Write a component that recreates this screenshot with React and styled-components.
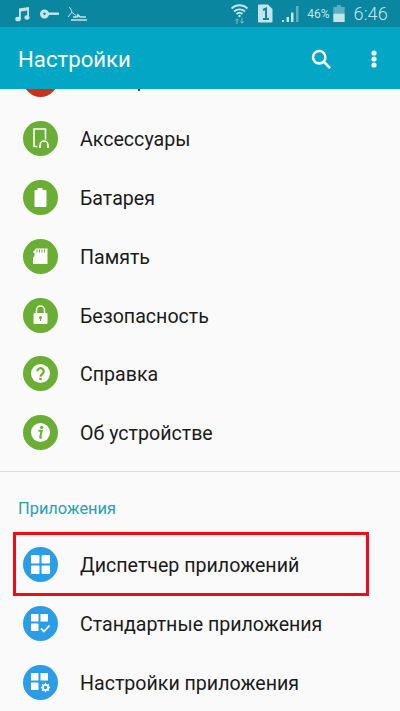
import React from "react";
import styled, { createGlobalStyle } from "styled-components";

const GlobalStyle = createGlobalStyle`
  html, body {
    margin: 0;
    padding: 0;
    background: #fafafa;
  }
`;

const Screen = styled.div`
  width: 400px;
  height: 711px;
  display: flex;
  flex-direction: column;
  overflow: hidden;
  background: #fafafa;
  font-family: Roboto, "Noto Sans", sans-serif;
`;
const StatusBar = styled.div`
  height: 27px;
  flex: none;
  display: flex;
  align-items: center;
  padding: 0 12px 0 15px;
  background: #0a86a1;
  color: #c4e4ea;
`;
const StatusIcon = styled.svg`
  display: block;
  flex: none;
  margin-right: ${(props) => props.$gap || 0}px;
`;
const Spacer = styled.div`
  flex: 1;
`;
const Percent = styled.span`
  font-size: 12px;
  margin-right: 4px;
`;
const Clock = styled.span`
  font-size: 18px;
  font-weight: 300;
  margin-left: 8px;
  letter-spacing: 0.2px;
`;
const AppBar = styled.div`
  height: 62px;
  flex: none;
  display: flex;
  align-items: center;
  padding: 1px 23px 0 18px;
  box-sizing: border-box;
  background: #04a6c6;
  color: #fff;
  position: relative;
  z-index: 1;
`;
const Title = styled.div`
  flex: 1;
  font-size: 22.2px;
`;
const ActionIcon = styled.svg`
  display: block;
  margin-right: ${(props) => props.$gap || 0}px;
`;
const List = styled.div`
  flex: 1;
  overflow: hidden;
  margin-top: -38.5px;
`;
const Row = styled.div`
  height: 58.8px;
  display: flex;
  align-items: center;
  padding-left: 23px;
  position: relative;
`;
const Badge = styled.div`
  width: 35px;
  height: 35px;
  flex: none;
  border-radius: 50%;
  background: ${(props) => props.$color};
  display: flex;
  align-items: center;
  justify-content: center;
`;
const Label = styled.div`
  margin-left: 22px;
  padding-top: 2px;
  font-size: 19.6px;
  color: #1b1b1b;
`;
const Divider = styled.div`
  height: 1px;
  margin-top: 9px;
  background: #dcdcdc;
`;
const SectionTitle = styled.div`
  font-size: 16.4px;
  line-height: 20px;
  color: #2b9fb1;
  padding: 27px 18px 16px;
`;
const Highlight = styled.div`
  position: absolute;
  left: 13px;
  top: -3px;
  width: 356px;
  height: 64px;
  box-sizing: border-box;
  border: 3px solid #f20a14;
`;

const GREEN = "#6aae35";
const BLUE = "#2a9de6";

const Accessory = () => (
  <svg width="35" height="35" viewBox="0 0 35 35" fill="none" stroke="#fff">
    <path d="M22.500 18.500V8H11V25.500H14.500" strokeWidth="1.600" />
    <path d="M17 26v-2a4 4 0 0 1 8 0v2" strokeWidth="1.500" />
    <rect x="16" y="24.500" width="2" height="2.500" fill="#fff" stroke="none" />
    <rect x="24" y="24.500" width="2" height="2.500" fill="#fff" stroke="none" />
  </svg>
);
const Battery = () => (
  <svg width="35" height="35" viewBox="0 0 35 35" fill="#fff">
    <path d="M14.500 8h5v2h3a1 1 0 0 1 1 1v15a1 1 0 0 1-1 1h-10a1 1 0 0 1-1-1V11a1 1 0 0 1 1-1h2z" />
  </svg>
);
const Memory = () => (
  <svg width="35" height="35" viewBox="0 0 35 35" fill="#fff">
    <path d="M13 9.500h11.500v15.500h-14.500v-6.500l1.500-1.500v-2.500l-1.500-1.500z" />
    <path d="M14 10.500v3M16.500 10.500v3M19 10.500v3M21.500 10.500v3" stroke={GREEN} strokeWidth="1" />
  </svg>
);
const Lock = () => (
  <svg width="35" height="35" viewBox="0 0 35 35" fill="none">
    <path d="M13.500 15v-3a4 4 0 0 1 8 0v3" stroke="#fff" strokeWidth="1.500" />
    <rect x="10.500" y="15" width="14" height="11" rx="1" fill="#fff" />
    <circle cx="17.500" cy="19.500" r="1.500" fill={GREEN} />
    <rect x="16.900" y="20" width="1.200" height="3" fill={GREEN} />
  </svg>
);
const Help = () => (
  <svg width="35" height="35" viewBox="0 0 35 35" fill="none">
    <circle cx="17.500" cy="17.500" r="9.500" fill="#fff" />
    <path d="M14.300 15.300a3.200 3.200 0 1 1 5 2.700c-1.200.8-1.800 1.300-1.800 2.700" stroke={GREEN} strokeWidth="2.200" />
    <rect x="16.300" y="21.800" width="2.400" height="2.400" fill={GREEN} />
  </svg>
);
const Info = () => (
  <svg width="35" height="35" viewBox="0 0 35 35" fill="none">
    <circle cx="17.500" cy="17.500" r="9.500" fill="#fff" />
    <circle cx="18.600" cy="12.300" r="1.600" fill={GREEN} />
    <path d="M15.500 15.800h3.200l-1.500 6.400c-.1.600.4.700 1.700.2" stroke={GREEN} strokeWidth="2" />
  </svg>
);
const Grid = () => (
  <svg width="35" height="35" viewBox="0 0 35 35" fill="#fff">
    <rect x="8" y="8" width="8.500" height="8.500" rx="1" />
    <rect x="18.500" y="8" width="8.500" height="8.500" rx="1" />
    <rect x="8" y="18.500" width="8.500" height="8.500" rx="1" />
    <rect x="18.500" y="18.500" width="8.500" height="8.500" rx="1" />
  </svg>
);
const GridCheck = () => (
  <svg width="35" height="35" viewBox="0 0 35 35" fill="#fff">
    <rect x="8" y="8" width="7.500" height="7.500" rx="0.500" />
    <rect x="17.500" y="8" width="7.500" height="7.500" rx="0.500" />
    <rect x="8" y="17.500" width="7.500" height="7.500" rx="0.500" />
    <path d="M18 22.500l3 3 5.500-6" fill="none" stroke="#fff" strokeWidth="1.800" />
  </svg>
);
const GridGear = () => (
  <svg width="35" height="35" viewBox="0 0 35 35" fill="#fff">
    <rect x="8" y="8" width="7.500" height="7.500" rx="0.500" />
    <rect x="17.500" y="8" width="7.500" height="7.500" rx="0.500" />
    <rect x="8" y="17.500" width="7.500" height="7.500" rx="0.500" />
    <circle cx="22.500" cy="22.500" r="2.600" fill="none" stroke="#fff" strokeWidth="1.800" />
    <path d="M22.500 17.800v2M22.500 25.200v2M17.800 22.500h2M25.200 22.500h2M19.200 19.200l1.400 1.400M24.400 24.400l1.400 1.400M19.200 25.800l1.400-1.400M24.400 20.600l1.400-1.400" stroke="#fff" strokeWidth="1.300" />
  </svg>
);

const topItems = [
  { label: "Блокировка", color: "#c8321e" },
  { label: "Аксессуары", color: GREEN, Icon: Accessory },
  { label: "Батарея", color: GREEN, Icon: Battery },
  { label: "Память", color: GREEN, Icon: Memory },
  { label: "Безопасность", color: GREEN, Icon: Lock },
  { label: "Справка", color: GREEN, Icon: Help },
  { label: "Об устройстве", color: GREEN, Icon: Info },
];
const appItems = [
  { label: "Диспетчер приложений", color: BLUE, Icon: Grid, marked: true },
  { label: "Стандартные приложения", color: BLUE, Icon: GridCheck },
  { label: "Настройки приложения", color: BLUE, Icon: GridGear },
];

const SettingsRow = ({ label, color, Icon, marked }) => (
  <Row>
    <Badge $color={color}>{Icon && <Icon />}</Badge>
    <Label>{label}</Label>
    {marked && <Highlight />}
  </Row>
);

const App = () => (
  <Screen>
    <GlobalStyle />
    <StatusBar>
      <StatusIcon $gap={10} width="15" height="16" viewBox="0 0 15 16" fill="currentColor">
        <path d="M4 2.500L14 1v10.500h-1.800V4.500L5.800 5.500V13H4z" />
        <ellipse cx="3" cy="13" rx="2.800" ry="2.300" />
        <ellipse cx="12" cy="11.500" rx="2.600" ry="2.200" />
      </StatusIcon>
      <StatusIcon $gap={8} width="19" height="10" viewBox="0 0 19 10" fill="currentColor">
        <path d="M4.500 0.500a4.500 4.500 0 1 1-.01 0zM4.500 3.500a1.200 1.200 0 1 0 .01 0z" fillRule="evenodd" />
        <rect x="8" y="3.500" width="11" height="2.400" />
      </StatusIcon>
      <StatusIcon width="20" height="16" viewBox="0 0 20 16" fill="none" stroke="currentColor">
        <path d="M2 1.500c1.500 0 2 2 3 4.500l-4 5M5 6.500l4 3" strokeWidth="1" />
        <path d="M6 11h4l1-2 2 2h6M4 14h16" strokeWidth="1.700" />
      </StatusIcon>
      <Spacer />
      <StatusIcon $gap={9} width="19" height="21" viewBox="0 0 18 21" fill="none" stroke="currentColor">
        <path d="M1 5.500a11.500 11.500 0 0 1 16 0M3.500 8.500a8 8 0 0 1 11 0M6 11a4.200 4.200 0 0 1 6 0" strokeWidth="1.800" />
        <circle cx="9" cy="13" r="1.200" fill="currentColor" stroke="none" />
        <path d="M6.500 21v-5M4.800 17.500l1.700-1.700 1.700 1.700M11.500 15v5M9.800 18.500l1.700 1.700 1.700-1.700" strokeWidth="1" opacity="0.6" />
      </StatusIcon>
      <StatusIcon $gap={9} width="15" height="19" viewBox="0 0 15 19">
        <path d="M1 0.500h9l4.500 4.500v12.500a1 1 0 0 1-1 1H1a1 1 0 0 1-1-1v-16a1 1 0 0 1 1-1z" fill="currentColor" />
        <path d="M5 6l3-1.500V15M5 15h6" fill="none" stroke="#0a86a1" strokeWidth="2" />
      </StatusIcon>
      <StatusIcon $gap={7} width="18" height="18" viewBox="0 0 18 18" fill="currentColor">
        <rect x="0" y="15" width="2" height="2" />
        <rect x="4.500" y="12" width="2.500" height="5" />
        <rect x="9" y="7.500" width="2.500" height="9.500" />
        <rect x="14" y="1" width="2.500" height="16" opacity="0.45" />
      </StatusIcon>
      <Percent>46%</Percent>
      <StatusIcon width="12" height="17" viewBox="0 0 12 18" fill="currentColor">
        <path d="M4 0h4v2h4v7H0V2h4z" opacity="0.45" />
        <rect x="0" y="9" width="12" height="9" />
      </StatusIcon>
      <Clock>6:46</Clock>
    </StatusBar>
    <AppBar>
      <Title>Настройки</Title>
      <ActionIcon $gap={39} width="21" height="20" viewBox="0 0 23 22" fill="none" stroke="#fff" strokeWidth="2.800">
        <circle cx="9" cy="9" r="6.800" />
        <path d="M14 14l7 7" />
      </ActionIcon>
      <ActionIcon width="6" height="18" viewBox="0 0 6 18" fill="#fff">
        <circle cx="3" cy="3" r="2.600" />
        <circle cx="3" cy="9" r="2.600" />
        <circle cx="3" cy="15" r="2.600" />
      </ActionIcon>
    </AppBar>
    <List>
      {topItems.map((item) => (
        <SettingsRow key={item.label} {...item} />
      ))}
      <Divider />
      <SectionTitle>Приложения</SectionTitle>
      {appItems.map((item) => (
        <SettingsRow key={item.label} {...item} />
      ))}
    </List>
  </Screen>
);

export default App;
